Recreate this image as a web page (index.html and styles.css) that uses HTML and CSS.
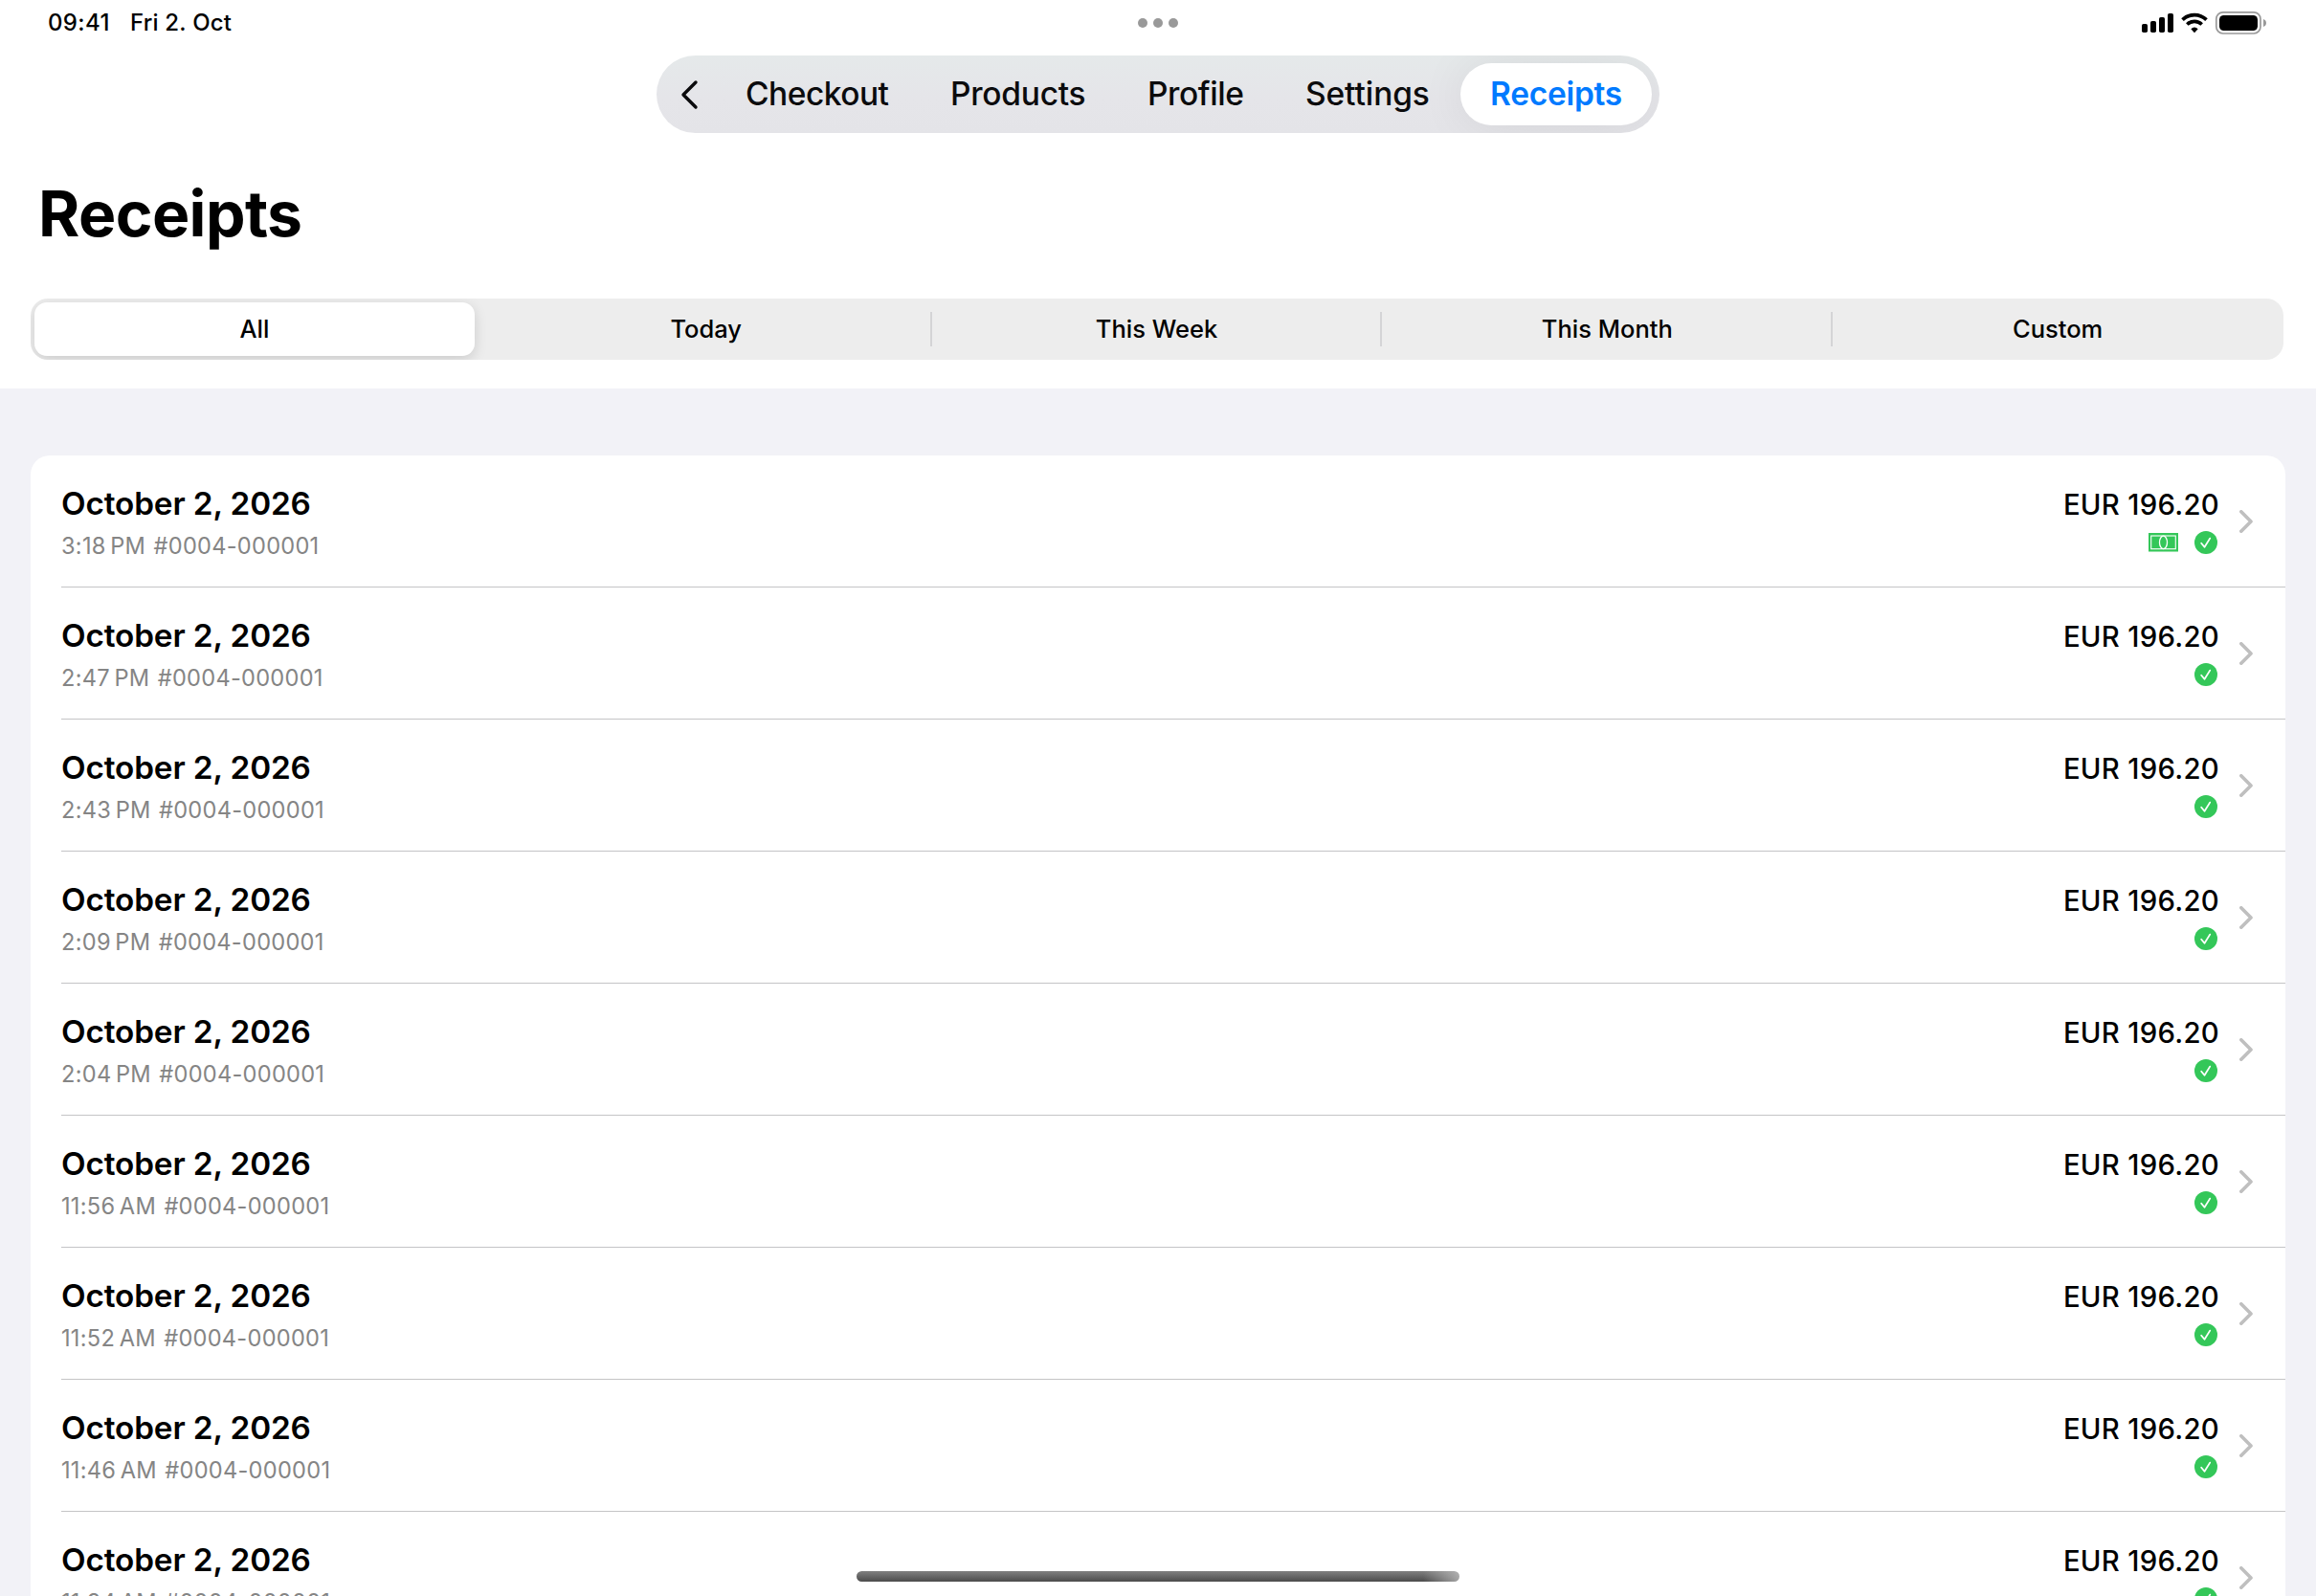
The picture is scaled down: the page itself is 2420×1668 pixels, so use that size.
FILE: index.html
```
<!DOCTYPE html>
<html lang="en">
<head>
<meta charset="utf-8">
<title>Receipts</title>
<link rel="stylesheet" href="styles.css">
</head>
<body>
<svg class="defs" width="0" height="0">
  <symbol id="cash" viewBox="0 0 31 20">
    <rect width="31" height="19.5" fill="#34c759"/>
    <rect x="2.7" y="3" width="25.6" height="13.7" fill="none" stroke="#fff" stroke-width="1.1"/>
    <ellipse cx="15.5" cy="9.9" rx="4" ry="6.7" fill="#34c759" stroke="#fff" stroke-width="1.3"/>
  </symbol>
  <symbol id="check" viewBox="0 0 24 24">
    <circle cx="12" cy="12" r="12" fill="#34c759"/>
    <path d="M7.2 12.8 L10.5 16.8 L16.2 7.6" fill="none" stroke="#fff" stroke-width="1.8" stroke-linecap="round" stroke-linejoin="round"/>
  </symbol>
  <symbol id="chevron" viewBox="0 0 14 24">
    <path d="M1.8 1.8 L12 12 L1.8 22.2" fill="none" stroke="#bfbfbf" stroke-width="3.6" stroke-linecap="round" stroke-linejoin="round"/>
  </symbol>
</svg>
<div class="screen">
  <header class="header">
    <div class="status">
      <div class="status-left"><span class="time">09:41</span><span class="date">Fri 2. Oct</span></div>
      <div class="dots"><i></i><i></i><i></i></div>
      <div class="status-right">
        <svg width="134" height="26" viewBox="0 0 134 26">
          <rect x="2" y="14" width="6" height="9" rx="1.8"/>
          <rect x="11" y="11" width="6" height="12" rx="1.8"/>
          <rect x="20" y="7" width="6" height="16" rx="1.8"/>
          <rect x="29" y="3" width="6" height="20" rx="1.8"/>
          <g fill="none" stroke="#000" stroke-width="3.7">
            <path d="M44.5 9.6 A18 18 0 0 1 69.5 9.6"/>
            <path d="M49.3 14.5 A11.2 11.2 0 0 1 64.7 14.5"/>
          </g>
          <path d="M57 23.3 L53.3 19.3 Q57 15.7 60.7 19.3 Z"/>
          <rect x="79.8" y="1.8" width="46.2" height="22.2" rx="7" fill="none" stroke="#999" stroke-width="1.7"/>
          <rect x="83" y="5" width="40" height="16" rx="4.6"/>
          <path d="M129 9 Q132 10.2 132 13 Q132 15.8 129 17 Z" fill="#999"/>
        </svg>
      </div>
    </div>
    <nav class="tabs">
      <svg class="back" width="20" height="32" viewBox="0 0 20 32"><path d="M17 3 L4 16 L17 29" fill="none" stroke="#0b0b0d" stroke-width="3.4" stroke-linecap="round" stroke-linejoin="round"/></svg>
      <a class="tab t1">Checkout</a><a class="tab t2">Products</a><a class="tab t3">Profile</a><a class="tab t4">Settings</a><a class="tab active">Receipts</a>
    </nav>
    <h1>Receipts</h1>
    <div class="segments">
      <div class="seg on">All</div><div class="seg">Today</div><div class="seg">This Week</div><div class="seg">This Month</div><div class="seg">Custom</div>
    </div>
  </header>
  <main class="list" id="list"></main>
  <div class="home"></div>
</div>
<script src="script.js"></script>
</body>
</html>
```
FILE: styles.css
```
* { box-sizing: border-box; }
body { margin: 0; font-family: Inter, "Liberation Sans", sans-serif; color: #000; background: #f2f2f7; }
.defs { position: absolute; }
.screen { position: relative; width: 2420px; height: 1668px; overflow: hidden; background: #f2f2f7; }
.header { height: 406px; background: #fff; display: flex; flex-direction: column; }
.status { height: 58px; padding: 11px 50px 0 50px; display: grid; grid-template-columns: 1fr auto 1fr; align-items: start; }
.status-left { display: flex; gap: 22px; font-size: 24px; line-height: 26px; font-weight: 500; letter-spacing: .2px; }
.time { width: 64px; white-space: nowrap; letter-spacing: .35px; }
.dots { display: flex; gap: 6px; padding-top: 8px; }
.dots i { width: 10px; height: 10px; border-radius: 50%; background: #999; }
.status-right { display: flex; justify-content: flex-end; }
.tabs { align-self: center; width: 1048px; height: 81px; border-radius: 40.5px; background: linear-gradient(#e5e9ea, #e5e5e9 55%, #e4e4e8); display: flex; align-items: center; padding: 0 8px 0 24px; font-size: 33.5px; font-weight: 500; line-height: 65px; letter-spacing: -.25px; overflow: hidden; }
.tab { color: #0b0b0d; white-space: nowrap; flex: none; }
.back { flex: none; margin-right: 49px; }
.t1 { width: 214px; letter-spacing: -.5px; }
.t2 { width: 206px; }
.t3 { width: 165px; letter-spacing: -.4px; }
.t4 { width: 162px; letter-spacing: -.1px; }
.active { width: 200px; height: 65px; text-align: center; border-radius: 33px; background: #fff; color: #007aff; font-weight: 600; letter-spacing: -.3px; box-shadow: 0 2px 50px rgba(0,0,0,.07); }
h1 { margin: 44px 0 0 40px; font-size: 66px; line-height: 80px; font-weight: 700; letter-spacing: -.6px; }
.segments { margin: 49px 34px 0 32px; height: 64px; border-radius: 18px; background: #ededed; display: grid; grid-template-columns: repeat(5, 1fr); overflow: hidden; font-size: 25.5px; font-weight: 500; line-height: 64px; }
.seg { text-align: center; position: relative; }
.seg + .seg { padding-right: 1px; }
.seg + .seg + .seg::before { content: ""; position: absolute; left: -2px; top: 14px; width: 2px; height: 36px; background: #d4d4d6; }
.on { margin: 4px 7px 4px 4px; line-height: 56px; border-radius: 13px; background: #fff; box-shadow: 0 4px 14px rgba(0,0,0,.14); }
.list { margin: 70px 32px 0; background: #fff; border-radius: 20px 20px 0 0; height: 1192px; overflow: hidden; }
.row { height: 138px; margin-left: 32px; padding-right: 34px; border-bottom: 1px solid #c4c4c6; display: flex; }
.info { flex: 1; padding: 30px 0 0; }
.day { font-size: 33.3px; line-height: 40px; font-weight: 600; letter-spacing: -.12px; }
.meta { font-size: 23.6px; line-height: 30px; margin-top: 10px; color: #858585; white-space: nowrap; letter-spacing: .27px; word-spacing: 1.5px; }
.side { padding: 32px 22px 0 0; display: flex; flex-direction: column; align-items: flex-end; }
.amount { font-size: 29.3px; line-height: 40px; font-weight: 500; letter-spacing: .3px; margin-right: -1px; }
.icons { display: flex; gap: 17px; align-items: center; margin-top: 7px; margin-right: 1px; height: 24px; }
.chev { margin-top: 57px; }
.home { position: absolute; left: 895px; top: 1642px; width: 630px; height: 11px; border-radius: 6px; background: linear-gradient(90deg, transparent 94%, rgba(200,200,200,.7)), linear-gradient(#808080, #4c4c4c); }
```
FILE: script.js
```
const times = ["3:18 PM", "2:47 PM", "2:43 PM", "2:09 PM", "2:04 PM", "11:56 AM", "11:52 AM", "11:46 AM", "11:34 AM"];
document.getElementById("list").innerHTML = times.map((t, i) => `
  <div class="row">
    <div class="info">
      <div class="day">October 2, 2026</div>
      <div class="meta">${t.replace(" ", "\u202f")} #0004-000001</div>
    </div>
    <div class="side">
      <div class="amount">EUR 196.20</div>
      <div class="icons">${i === 0 ? '<svg width="31" height="20"><use href="#cash"/></svg>' : ""}<svg width="24" height="24"><use href="#check"/></svg></div>
    </div>
    <svg class="chev" width="14" height="24"><use href="#chevron"/></svg>
  </div>`).join("");
```
